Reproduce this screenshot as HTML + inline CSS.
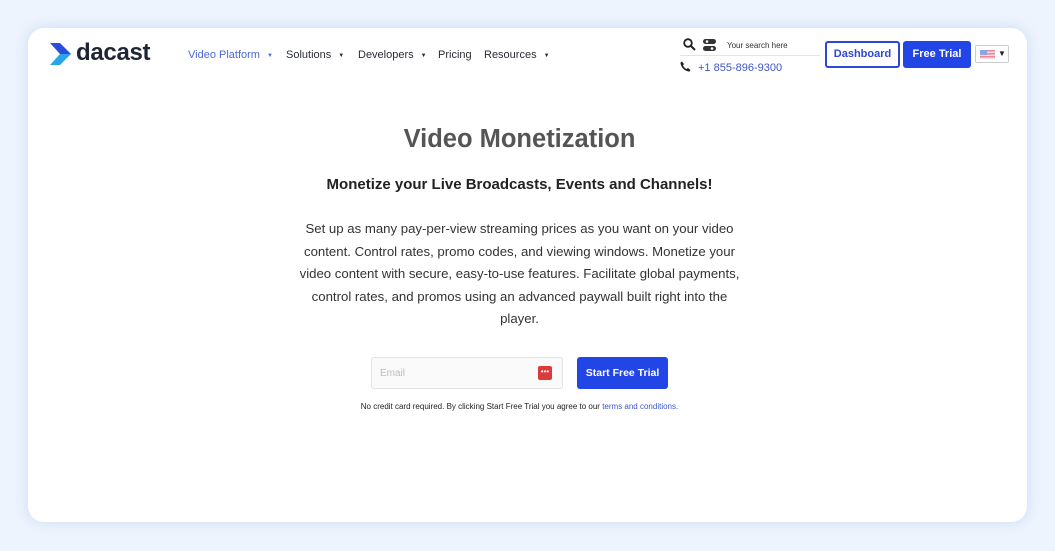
<!DOCTYPE html>
<html><head><meta charset="utf-8"><style>
*{margin:0;padding:0;box-sizing:border-box}
body{width:1055px;height:551px;background:#edf4fd;font-family:"Liberation Sans",sans-serif;position:relative;overflow:hidden}
.card{position:absolute;left:28px;top:28px;width:999px;height:494px;background:#fff;border-radius:16px;box-shadow:0 0 14px rgba(180,205,240,.6)}
.abs{position:absolute;white-space:nowrap}
.nav{font-size:11px;color:#2a2d34}
.nav .c{font-size:6px;margin-left:7px;vertical-align:1px}
</style></head><body>
<div class="card"></div>
<svg class="abs" style="left:50px;top:43px" width="22" height="22" viewBox="0 0 22 22"><path d="M0 0h10l11 11h-11z" fill="#2a4de0"/><path d="M10 11h11l-11 11h-10z" fill="#2aa6e8"/></svg>
<div class="abs" style="left:76px;top:39px;font-size:24px;font-weight:bold;color:#1e2533;letter-spacing:-0.3px">dacast</div>
<div class="abs nav" style="left:188px;top:49px;color:#4b68d8">Video Platform<span class="c" style="color:#4b68d8">▼</span></div>
<div class="abs nav" style="left:286px;top:49px">Solutions<span class="c">▼</span></div>
<div class="abs nav" style="left:358px;top:49px">Developers<span class="c">▼</span></div>
<div class="abs nav" style="left:438px;top:49px">Pricing</div>
<div class="abs nav" style="left:484px;top:49px">Resources<span class="c">▼</span></div>
<svg class="abs" style="left:683px;top:38px" width="13" height="13" viewBox="0 0 13 13"><circle cx="5" cy="5" r="3.8" stroke="#222" stroke-width="1.8" fill="none"/><path d="M8 8l4 4" stroke="#222" stroke-width="2"/></svg>
<svg class="abs" style="left:703px;top:39px" width="13" height="12" viewBox="0 0 13 12"><rect x="0" y="0" width="13" height="5" rx="2.5" fill="#333"/><rect x="0" y="7" width="13" height="5" rx="2.5" fill="#333"/><circle cx="4" cy="2.5" r="1.3" fill="#fff"/><circle cx="9" cy="9.5" r="1.3" fill="#fff"/></svg>
<div class="abs" style="left:727px;top:41px;font-size:8px;color:#333">Your search here</div>
<div class="abs" style="left:680px;top:55px;width:140px;height:1px;background:#e3e3e3"></div>
<svg class="abs" style="left:680px;top:61px" width="11" height="11" viewBox="0 0 11 11"><path d="M2 0.5l2 2.5-1 1.5c.8 1.6 1.9 2.7 3.5 3.5l1.5-1 2.5 2-1 1.5C5 10.5.5 6 .5 1.5z" fill="#222"/></svg>
<div class="abs" style="left:698px;top:62px;font-size:11px;color:#3f56c8">+1 855-896-9300</div>
<div class="abs" style="left:825px;top:41px;width:75px;height:27px;border:2px solid #2e47d6;border-radius:3px;color:#2e47d6;font-size:11px;font-weight:bold;text-align:center;line-height:23px">Dashboard</div>
<div class="abs" style="left:903px;top:41px;width:68px;height:27px;background:#2245e5;border-radius:3px;color:#fff;font-size:11px;font-weight:bold;text-align:center;line-height:27px">Free Trial</div>
<div class="abs" style="left:975px;top:45px;width:34px;height:18px;border:1px solid #ccc;border-radius:2px"><div style="position:absolute;left:4px;top:4px;width:15px;height:9px;background:repeating-linear-gradient(#e98a9a 0 1.5px,#f5dbe0 1.5px 3px)"><div style="width:7px;height:5px;background:#8fa4e0"></div></div><span style="position:absolute;left:22px;top:3px;font-size:8px;color:#222">▼</span></div>
<div class="abs" style="left:0;width:1039px;top:125px;text-align:center;font-size:25.5px;font-weight:bold;color:#555">Video Monetization</div>
<div class="abs" style="left:0;width:1039px;top:176px;text-align:center;font-size:15px;font-weight:bold;color:#222">Monetize your Live Broadcasts, Events and Channels!</div>
<div class="abs" style="left:295px;width:449px;top:218px;text-align:center;font-size:13.2px;line-height:22.5px;color:#333;white-space:normal">Set up as many pay-per-view streaming prices as you want on your video content. Control rates, promo codes, and viewing windows. Monetize your video content with secure, easy-to-use features. Facilitate global payments, control rates, and promos using an advanced paywall built right into the player.</div>
<div class="abs" style="left:371px;top:357px;width:192px;height:32px;border:1px solid #e3e3e3;border-radius:3px;background:#fafafa"><span style="position:absolute;left:8px;top:10px;font-size:10px;color:#bbb">Email</span><div style="position:absolute;left:166px;top:8px;width:14px;height:14px;background:#dc3b3b;border-radius:2px;color:#fff;font-size:8px;line-height:11px;text-align:center">•••</div></div>
<div class="abs" style="left:577px;top:357px;width:91px;height:32px;background:#2245e5;border-radius:3px;color:#fff;font-size:10.5px;font-weight:bold;text-align:center;line-height:32px">Start Free Trial</div>
<div class="abs" style="left:0;width:1039px;top:402px;text-align:center;font-size:8px;color:#222">No credit card required. By clicking Start Free Trial you agree to our <span style="color:#3f56c8">terms and conditions.</span></div>
</body></html>
